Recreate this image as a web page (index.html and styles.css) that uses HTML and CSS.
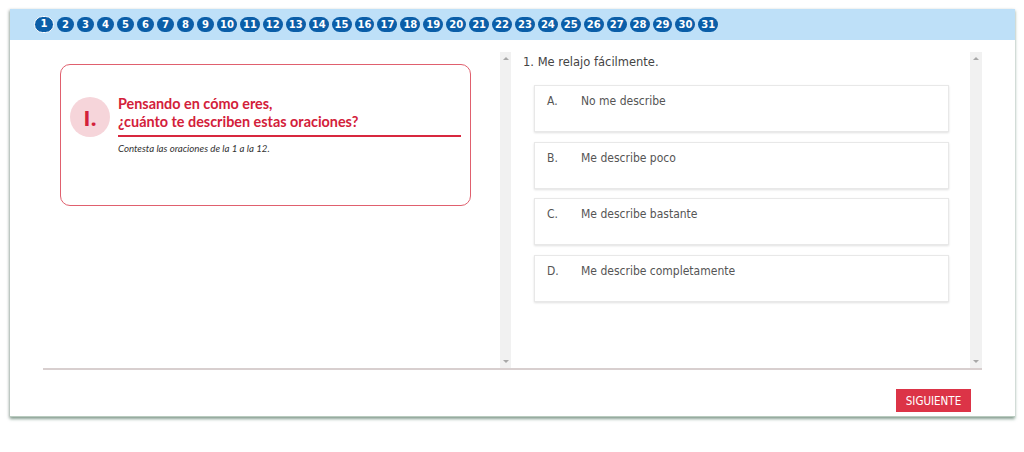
FILE: index.html
```html
<!DOCTYPE html>
<html lang="es">
<head>
  <meta charset="UTF-8" />
  <title>Cuestionario</title>
  <link rel="stylesheet" href="styles.css">
</head>
<body>
  <div id="quiz-card">
    <div class="steps" id="steps"></div>

    <div class="main">
      <div class="intro-col">
        <div class="intro-box">
          <div class="roman">I.</div>
          <div class="intro-text">
            <h2>Pensando en cómo eres,<br>¿cuánto te describen estas oraciones?</h2>
            <p>Contesta las oraciones de la 1 a la 12.</p>
          </div>
        </div>
      </div>

      <div class="question-col">
        <div class="scrollbar"><span class="arrow up"></span><span class="arrow down"></span></div>
        <div class="question-body">
          <p class="question">1. Me relajo fácilmente.</p>
          <div class="choices">
            <div class="choice"><span class="letter">A.</span><span>No me describe</span></div>
            <div class="choice"><span class="letter">B.</span><span>Me describe poco</span></div>
            <div class="choice"><span class="letter">C.</span><span>Me describe bastante</span></div>
            <div class="choice"><span class="letter">D.</span><span>Me describe completamente</span></div>
          </div>
        </div>
        <div class="scrollbar right"><span class="arrow up"></span><span class="arrow down"></span></div>
      </div>
    </div>

    <div class="footer">
      <button class="next-btn">SIGUIENTE</button>
    </div>
  </div>

  <script>
    const total = 31;
    const current = 1;
    const steps = document.getElementById("steps");
    for (let i = 1; i <= total; i++) {
      const pill = document.createElement("span");
      pill.className = i === current ? "step active" : "step";
      pill.innerText = i;
      steps.appendChild(pill);
    }
  </script>
</body>
</html>
```

FILE: styles.css
```css
html, body {
  margin: 0;
  padding: 0;
  background: #fff;
}
body {
  font-family: "DejaVu Sans", Verdana, sans-serif;
  color: #444;
  padding-top: 9px;
  height: 452px;
  box-sizing: border-box;
}
#quiz-card {
  margin: 0 9px 0 10px;
  height: 407px;
  background: #fff;
  border-bottom: 1px solid #b9cbbf;
  box-shadow: -1px 1px 3px rgba(0, 0, 0, 0.2), 0 2px 3px rgba(90, 135, 110, 0.6);
  display: flex;
  flex-direction: column;
}
.steps {
  height: 31px;
  flex: none;
  background: #bee0f8;
  display: flex;
  align-items: center;
  gap: 3px;
  padding-left: 24px;
}
.step {
  box-sizing: border-box;
  min-width: 17px;
  height: 15px;
  padding: 0 3px;
  border-radius: 8px;
  background: #0b5ea8;
  color: #fff;
  font-size: 10px;
  font-weight: bold;
  line-height: 15px;
  text-align: center;
}
.step.active {
  min-width: 20px;
  height: 17px;
  line-height: 14px;
  border: 1.5px solid #fff;
  border-radius: 9px;
}
.main {
  flex: none;
  margin: 12px 33px 0 33px;
  height: 316px;
  border-bottom: 2px solid #d8cfcf;
  display: flex;
}
.intro-col {
  width: 457px;
  padding: 12px 29px 0 17px;
  box-sizing: border-box;
}
.intro-box {
  height: 142px;
  box-sizing: border-box;
  border: 1px solid #e0606e;
  border-radius: 10px;
  padding: 32px 9px 0 9px;
  display: flex;
  gap: 8px;
}
.roman {
  flex: none;
  width: 40px;
  height: 40px;
  border-radius: 50%;
  background: #f6d5da;
  color: #d3203a;
  font-family: "Open Sans", sans-serif;
  font-size: 22px;
  font-weight: bold;
  line-height: 40px;
  text-align: center;
}
.intro-text {
  flex: 1;
  font-family: Lato, sans-serif;
}
.intro-text h2 {
  margin: -2px 0 0 0;
  padding-bottom: 4px;
  border-bottom: 2px solid #d8283f;
  color: #d3203a;
  font-size: 14.4px;
  font-weight: bold;
  line-height: 18px;
}
.intro-text p {
  margin: 5px 0 0 0;
  font-size: 9.7px;
  font-style: italic;
  color: #333;
}
.question-col {
  flex: 1;
  display: flex;
}
.scrollbar {
  position: relative;
  width: 11px;
  background: #f1f1f1;
}
.scrollbar.right {
  width: 12px;
}
.arrow {
  position: absolute;
  left: 50%;
  margin-left: -3px;
  border-left: 3px solid transparent;
  border-right: 3px solid transparent;
}
.arrow.up {
  top: 5px;
  border-bottom: 3px solid #a8a8a8;
}
.arrow.down {
  bottom: 5px;
  border-top: 3px solid #a8a8a8;
}
.question-body {
  flex: 1;
  padding: 3px 10px 0 12px;
}
.question {
  margin: 0;
  font-size: 11.5px;
  line-height: 15px;
  color: #444;
}
.choices {
  margin: 15px 11px 0 11px;
  display: flex;
  flex-direction: column;
  gap: 9.5px;
}
.choice {
  box-sizing: border-box;
  height: 47px;
  padding: 7px 12px 0 12px;
  border: 1px solid #e8e8e8;
  box-shadow: 0 1px 2px rgba(0, 0, 0, 0.12);
  font-family: "DejaVu Sans Condensed", "DejaVu Sans", sans-serif;
  font-size: 12px;
  line-height: 16px;
  color: #555;
  display: flex;
}
.letter {
  width: 34px;
}
.footer {
  flex: 1;
  display: flex;
  justify-content: flex-end;
  align-items: flex-end;
  padding: 0 44px 4px 0;
}
.next-btn {
  width: 75px;
  height: 23px;
  border: none;
  background: #dc3447;
  color: #fff;
  font-family: "DejaVu Sans Condensed", "DejaVu Sans", sans-serif;
  font-size: 11.5px;
  padding: 0;
  cursor: pointer;
}
```
